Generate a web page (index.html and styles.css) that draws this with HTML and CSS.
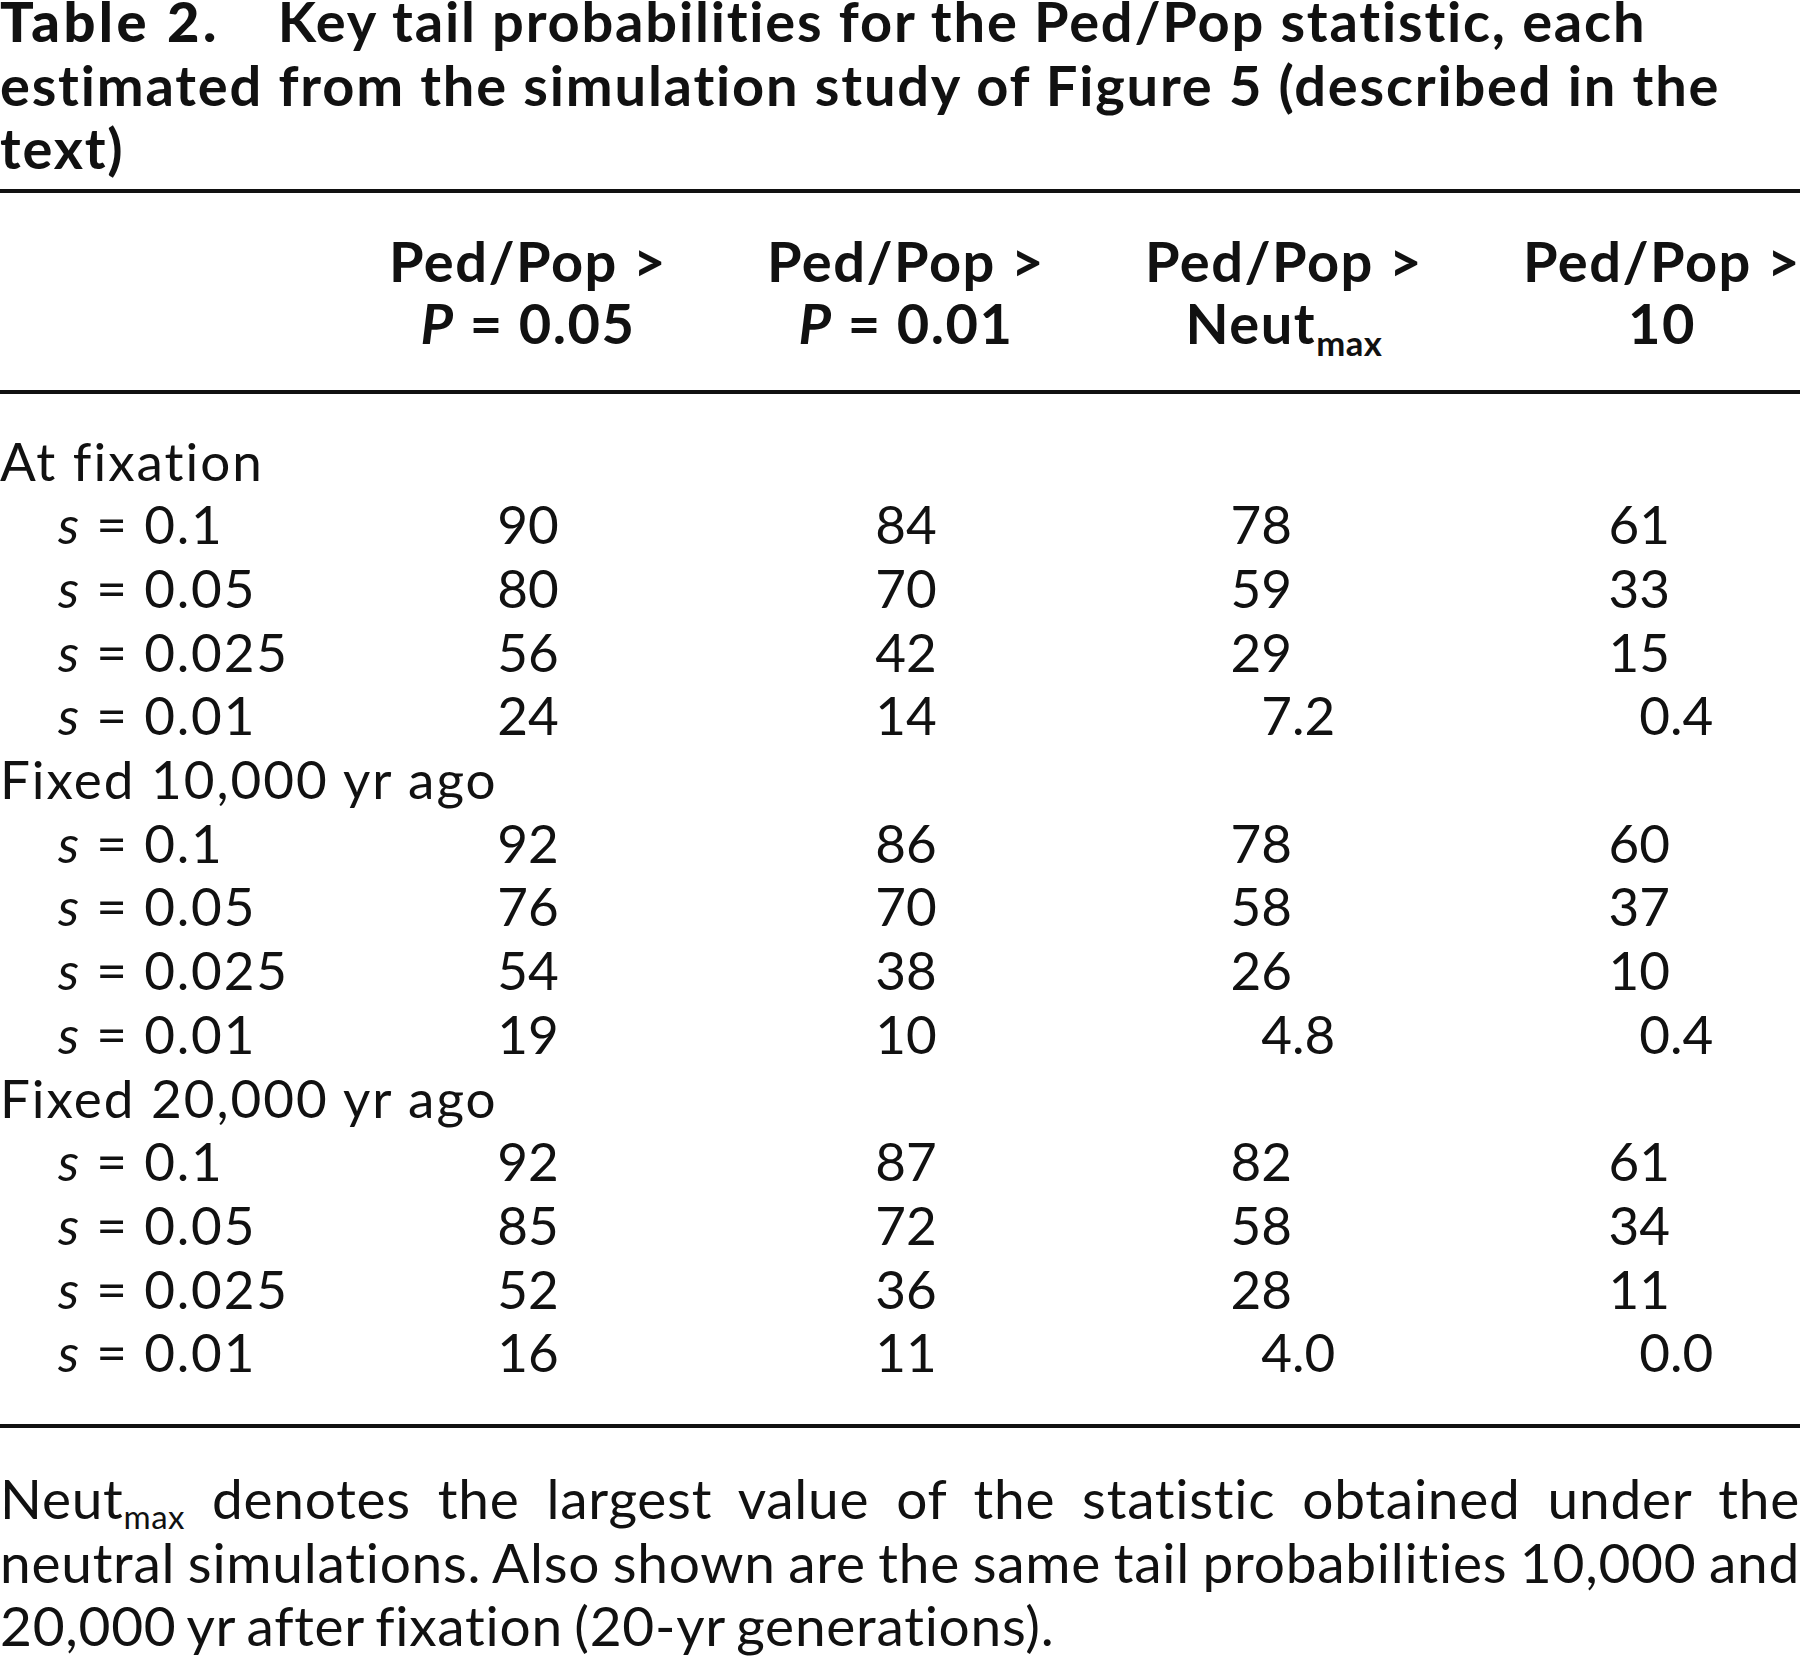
FILE: index.html
```html
<!DOCTYPE html>
<html lang="en">
<head>
<meta charset="utf-8">
<title>Table 2</title>
<link rel="stylesheet" href="styles.css">
</head>
<body>
<div class="page">
  <h1 class="caption"><span class="caption-label">Table 2.</span>Key tail probabilities for the Ped/Pop statistic, each<br>estimated from the simulation study of Figure 5 (described in the<br>text)</h1>
  <div class="table-wrap">
    <table class="data">
      <colgroup>
        <col class="c-label"><col class="c-num"><col class="c-num"><col class="c-num"><col class="c-num">
      </colgroup>
      <thead>
        <tr>
          <th></th>
          <th>Ped/Pop &gt;<br><i>P</i> = 0.05</th>
          <th>Ped/Pop &gt;<br><i>P</i> = 0.01</th>
          <th>Ped/Pop &gt;<br>Neut<sub>max</sub></th>
          <th>Ped/Pop &gt;<br>10</th>
        </tr>
      </thead>
      <tbody>
        <tr class="group first"><td colspan="5">At fixation</td></tr>
        <tr><td class="lbl"><i>s</i> = 0.1</td><td>90</td><td>84</td><td><span class="dec"><span class="int">78</span><span class="frac"></span></span></td><td><span class="dec"><span class="int">61</span><span class="frac"></span></span></td></tr>
        <tr><td class="lbl"><i>s</i> = 0.05</td><td>80</td><td>70</td><td><span class="dec"><span class="int">59</span><span class="frac"></span></span></td><td><span class="dec"><span class="int">33</span><span class="frac"></span></span></td></tr>
        <tr><td class="lbl"><i>s</i> = 0.025</td><td>56</td><td>42</td><td><span class="dec"><span class="int">29</span><span class="frac"></span></span></td><td><span class="dec"><span class="int">15</span><span class="frac"></span></span></td></tr>
        <tr><td class="lbl"><i>s</i> = 0.01</td><td>24</td><td>14</td><td><span class="dec"><span class="int">7</span><span class="frac">.2</span></span></td><td><span class="dec"><span class="int">0</span><span class="frac">.4</span></span></td></tr>
        <tr class="group"><td colspan="5">Fixed 10,000 yr ago</td></tr>
        <tr><td class="lbl"><i>s</i> = 0.1</td><td>92</td><td>86</td><td><span class="dec"><span class="int">78</span><span class="frac"></span></span></td><td><span class="dec"><span class="int">60</span><span class="frac"></span></span></td></tr>
        <tr><td class="lbl"><i>s</i> = 0.05</td><td>76</td><td>70</td><td><span class="dec"><span class="int">58</span><span class="frac"></span></span></td><td><span class="dec"><span class="int">37</span><span class="frac"></span></span></td></tr>
        <tr><td class="lbl"><i>s</i> = 0.025</td><td>54</td><td>38</td><td><span class="dec"><span class="int">26</span><span class="frac"></span></span></td><td><span class="dec"><span class="int">10</span><span class="frac"></span></span></td></tr>
        <tr><td class="lbl"><i>s</i> = 0.01</td><td>19</td><td>10</td><td><span class="dec"><span class="int">4</span><span class="frac">.8</span></span></td><td><span class="dec"><span class="int">0</span><span class="frac">.4</span></span></td></tr>
        <tr class="group"><td colspan="5">Fixed 20,000 yr ago</td></tr>
        <tr><td class="lbl"><i>s</i> = 0.1</td><td>92</td><td>87</td><td><span class="dec"><span class="int">82</span><span class="frac"></span></span></td><td><span class="dec"><span class="int">61</span><span class="frac"></span></span></td></tr>
        <tr><td class="lbl"><i>s</i> = 0.05</td><td>85</td><td>72</td><td><span class="dec"><span class="int">58</span><span class="frac"></span></span></td><td><span class="dec"><span class="int">34</span><span class="frac"></span></span></td></tr>
        <tr><td class="lbl"><i>s</i> = 0.025</td><td>52</td><td>36</td><td><span class="dec"><span class="int">28</span><span class="frac"></span></span></td><td><span class="dec"><span class="int">11</span><span class="frac"></span></span></td></tr>
        <tr class="last"><td class="lbl"><i>s</i> = 0.01</td><td>16</td><td>11</td><td><span class="dec"><span class="int">4</span><span class="frac">.0</span></span></td><td><span class="dec"><span class="int">0</span><span class="frac">.0</span></span></td></tr>
      </tbody>
    </table>
  </div>
  <p class="note">
    <span class="line">Neut<sub>max</sub> denotes the largest value of the statistic obtained under the</span>
    <span class="line">neutral simulations. Also shown are the same tail probabilities 10,000 and</span>
    <span class="line last-line">20,000 yr after fixation (20-yr generations).</span>
  </p>
</div>
</body>
</html>
```

FILE: styles.css
```css
html, body {
  margin: 0;
  padding: 0;
  background: #ffffff;
}

body {
  color: #111111;
  font-family: "Lato", "Open Sans", "Liberation Sans", sans-serif;
  overflow: hidden;
}

.page {
  width: 1800px;
  overflow: hidden;
}

.caption {
  margin: -11px 0 0 0;
  font-size: 56px;
  font-weight: 700;
  line-height: 63.5px;
  letter-spacing: 1.8px;
  color: #111111;
}

.caption-label {
  font-weight: 900;
  letter-spacing: 3.5px;
  margin-right: 58px;
}

.table-wrap {
  margin-top: 9px;
  width: 1800px;
  overflow: hidden;
}

.data {
  width: 1851px;
  border-collapse: collapse;
  table-layout: fixed;
  font-size: 53px;
}

.c-label { width: 339px; }
.c-num { width: 378px; }

.data thead tr {
  border-top: 4px solid #111111;
  border-bottom: 4px solid #111111;
}

.data th {
  font-weight: 700;
  font-size: 56px;
  line-height: 62px;
  letter-spacing: 1.5px;
  text-align: center;
  padding: 37px 0 36px 0;
  vertical-align: top;
}

.data th i {
  font-style: italic;
}

.data sub {
  font-size: 0.62em;
  line-height: 0;
  letter-spacing: 0.5px;
  vertical-align: -0.35em;
}

.data td {
  padding: 0;
  line-height: 63.7px;
  height: 63.7px;
  text-align: center;
  white-space: nowrap;
}

.data tr.group td {
  text-align: left;
  letter-spacing: 2px;
}

.data tr.first td {
  padding-top: 35px;
}

.data tr.last td {
  padding-bottom: 40px;
}

.data tbody {
  border-bottom: 4px solid #111111;
}

.data td.lbl {
  text-align: left;
  padding-left: 58px;
  letter-spacing: 1.8px;
}

.dec {
  display: inline-flex;
}

.dec .int {
  width: 1.16em;
  text-align: right;
}

.dec .frac {
  width: 0.86em;
  text-align: left;
}

.note {
  margin: 39px 0 0 0;
  font-size: 55px;
  line-height: 63.5px;
  letter-spacing: 0.75px;
  word-spacing: -3.5px;
  color: #111111;
}

.note .line {
  display: block;
  text-align: justify;
  text-align-last: justify;
  white-space: nowrap;
}

.note .line.last-line {
  text-align-last: left;
}

.note sub {
  font-size: 0.6em;
  line-height: 0;
  letter-spacing: 0.5px;
  vertical-align: -0.3em;
}
```
